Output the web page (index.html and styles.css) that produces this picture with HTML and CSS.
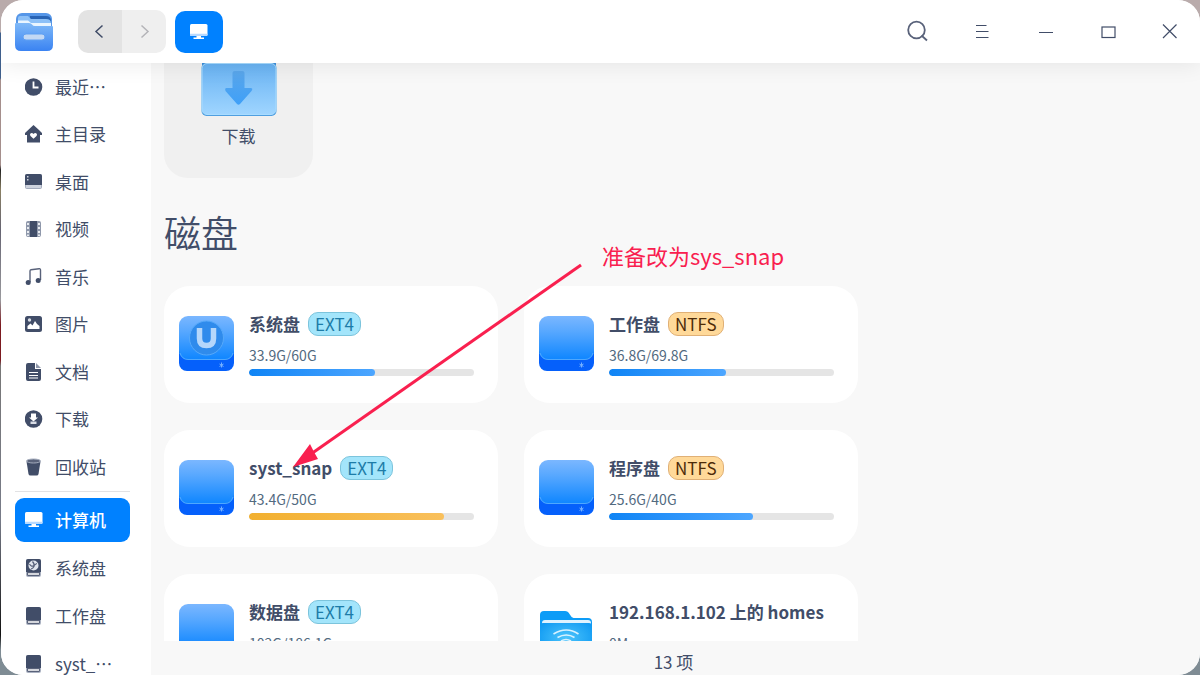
FILE: index.html
```html
<!DOCTYPE html>
<html lang="zh-CN">
<head>
<meta charset="utf-8">
<title>计算机</title>
<link rel="stylesheet" href="styles.css">
</head>
<body>
<svg class="defs" aria-hidden="true">
  <defs>
    <linearGradient id="diskTop" x1="0" y1="0" x2="0" y2="1"><stop offset="0" stop-color="#7bb7ff"/><stop offset=".35" stop-color="#58a8ff"/><stop offset="1" stop-color="#0f86ff"/></linearGradient>
    <linearGradient id="folderFront" x1="0" y1="0" x2="0" y2="1"><stop offset="0" stop-color="#68b2f2"/><stop offset="1" stop-color="#9fd5ff"/></linearGradient>
    <linearGradient id="arrowFill" x1="0" y1="0" x2="0" y2="1"><stop offset="0" stop-color="#5aa6ea"/><stop offset="1" stop-color="#3fa0f8"/></linearGradient>
    <radialGradient id="netFront" cx=".5" cy=".45" r=".6"><stop offset="0" stop-color="#4cc4fb"/><stop offset="1" stop-color="#119bf3"/></radialGradient>
    <linearGradient id="logoFront" x1="0" y1="0" x2="0" y2="1"><stop offset="0" stop-color="#7fb9f8"/><stop offset="1" stop-color="#3a83f2"/></linearGradient>
    <symbol id="disk" viewBox="0 0 55 55">
      <rect y="20" width="55" height="35" rx="8" fill="#0560fb"/>
      <path d="M0 34v3q2 7 9 7h37q7 0 9-7v-3z" fill="#0b74fb"/>
      <rect width="55" height="43.500" rx="9" fill="url(#diskTop)"/>
      <path d="M1 37q2 6.500 8 6.500h37q6 0 8-6.500" fill="none" stroke="#5fb2ff" stroke-width=".8"/>
      <path d="M42.500 46.500v5M40.500 48l4 2.500M44.500 48l-4 2.500" stroke="#75b1ff" stroke-width="1"/>
    </symbol>
    <symbol id="miniDisk" viewBox="0 0 18 18">
      <rect x="1" y="0" width="15" height="18" rx="2" fill="#aab1c1"/>
      <path d="M3 0h11q2 0 2 2v11H1V2q0-2 2-2z" fill="#414d68"/>
      <path d="M2 13h13v2.500q0 1.500-1.500 1.500h-10Q2 17 2 15.500z" fill="#59627a"/>
      <path d="M3 15h11" stroke="#fff" stroke-width="1.500"/>
    </symbol>
    <symbol id="monitor" viewBox="0 0 18 18">
      <rect x="0" y="1" width="17.500" height="12" rx="1.500" fill="#fff"/>
      <path d="M0 10.800h17.500v1q0 1.200-1.200 1.200H1.200Q0 13 0 11.800z" fill="#b7d9ff"/>
      <path d="M6.500 13h4.500v1.500h3V16h-10.500v-1.500h3z" fill="#fff"/>
    </symbol>
  </defs>
</svg>

<div class="window">
  <header class="titlebar">
    <svg class="logo" viewBox="0 0 38 38" aria-hidden="true">
      <rect x="1" y="0" width="36" height="22" rx="6" fill="#5596e8"/>
      <path d="M15 3h16q5 0 5 5v5H15z" fill="#2864b5"/>
      <path d="M3 5q0-2 2-2h8l3 3h15q5 0 5 4v5H3z" fill="#8cc0f7"/>
      <path d="M3 7.500h10l3 2.500h20v8H3z" fill="#e9f5ff"/>
      <path d="M0 11q0-1 1-1h13q2 0 3 1.500T20 13h17q1 0 1 1v18q0 6-6 6H6q-6 0-6-6z" fill="url(#logoFront)"/>
      <rect x="8" y="21" width="22" height="6" rx="3" fill="#c2d8f4" stroke="#5f9ff2"/>
    </svg>
    <nav class="history" aria-label="导航">
      <button class="back" aria-label="后退"><svg viewBox="0 0 16 16"><path d="M10.500 1.500 4 7.500l6.500 6" fill="none" stroke="#414d68" stroke-width="1.500"/></svg></button>
      <button class="forward" aria-label="前进"><svg viewBox="0 0 16 16"><path d="m5.500 1.500 6.500 6-6.500 6" fill="none" stroke="#b4b4b8" stroke-width="1.500"/></svg></button>
    </nav>
    <button class="place" aria-label="计算机"><svg viewBox="0 0 18 18"><use href="#monitor"/></svg></button>
    <div class="tools">
      <button aria-label="搜索"><svg viewBox="0 0 24 24"><circle cx="10.500" cy="10" r="8.300" fill="none" stroke="#59627a" stroke-width="1.800"/><path d="m15.500 15.500 5.500 5" stroke="#59627a" stroke-width="1.800"/></svg></button>
      <button aria-label="菜单"><svg viewBox="0 0 24 24"><path d="M7 5.500h10.500M7 11.500h12.500M7 17.500h12.500" stroke="#414d68" stroke-width="1.200"/></svg></button>
      <button aria-label="最小化"><svg viewBox="0 0 24 24"><path d="M7 12.500h14" stroke="#414d68" stroke-width="1.200"/></svg></button>
      <button aria-label="最大化"><svg viewBox="0 0 24 24"><rect x="7" y="7" width="13" height="10.500" fill="none" stroke="#414d68" stroke-width="1.200"/></svg></button>
      <button aria-label="关闭"><svg viewBox="0 0 24 24"><path d="m5 4.500 13.500 13.500M18.500 4.500 5 18" stroke="#414d68" stroke-width="1.200"/></svg></button>
    </div>
  </header>

  <div class="body">
    <aside class="sidebar">
      <ul class="places">
        <li><a href="#"><svg viewBox="0 0 18 18"><circle cx="8.500" cy="9" r="8.800" fill="#414d68"/><path d="M8.500 3.500v6h5" fill="none" stroke="#fff" stroke-width="1.800"/></svg><span>最近…</span></a></li>
        <li><a href="#"><svg viewBox="0 0 18 18"><path d="M8.500 0 0 8v2h2v7.500h13V10h2V8l-3-3z" fill="#414d68"/><path d="M8.500 13.800 5.500 11q-1.300-2.500 1-3 1.300 0 2 1 .7-1 2-1 2.300.5 1 3z" fill="#fff"/></svg><span>主目录</span></a></li>
        <li><a href="#"><svg viewBox="0 0 18 18"><rect y="1" width="17" height="15" rx="2" fill="#a3abbc"/><path d="M2 1h13q2 0 2 2v9H0V3q0-2 2-2z" fill="#414d68"/><path d="M2 3h1.500v1.500H2zM2 6h1.500v1.500H2zM1 12h15v3H1z" fill="#cdd2dd"/></svg><span>桌面</span></a></li>
        <li><a href="#"><svg viewBox="0 0 18 18"><rect x="1" y="1" width="15" height="16" rx="2" fill="#8f98ab"/><path d="M5 1h7v16H5z" fill="#414d68"/><path d="M2 3h2v2H2zM2 7h2v2H2zM2 11h2v2H2zM2 14.500h2V16H2zM13 3h2v2h-2zM13 7h2v2h-2zM13 11h2v2h-2zM13 14.500h2V16h-2z" fill="#e8ebf0"/></svg><span>视频</span></a></li>
        <li><a href="#"><svg viewBox="0 0 18 18"><path d="M5 14V3q0-1 1-1.300l8-1Q15.500.500 15.500 2v10" fill="none" stroke="#59627a" stroke-width="1.400"/><circle cx="3.200" cy="14.500" r="2.500" fill="#414d68"/><circle cx="13.200" cy="12.500" r="2.500" fill="#414d68"/></svg><span>音乐</span></a></li>
        <li><a href="#"><svg viewBox="0 0 18 18"><rect y="1" width="17" height="16" rx="2.500" fill="#414d68"/><path d="M2.500 14v-3l3-2.500 2 2 2.500-4.500 2 3 2.500 2v3z" fill="#fff"/><circle cx="4.500" cy="5" r="1.700" fill="#d9dde6"/></svg><span>图片</span></a></li>
        <li><a href="#"><svg viewBox="0 0 18 18"><path d="M3 0h7v6h6v10q0 2-2 2H3q-2 0-2-2V2q0-2 2-2z" fill="#414d68"/><path d="m11 0 5 5h-5z" fill="#8f98ab"/><path d="M4 9.500h9M4 12.500h9M4 15h9" stroke="#fff" stroke-width="1.200"/></svg><span>文档</span></a></li>
        <li><a href="#"><svg viewBox="0 0 18 18"><circle cx="8.500" cy="9" r="8.800" fill="#414d68"/><path d="M6 3.500h5v4h2l-4.500 4-4.500-4h2z" fill="#fff"/><path d="M5.500 11.500h6v2.500h-6z" fill="#d9dde6"/></svg><span>下载</span></a></li>
        <li><a href="#"><svg viewBox="0 0 18 18"><path d="M1.500 3.500h14l-2 12.500q-.3 1.500-2 1.500h-6q-1.700 0-2-1.500z" fill="#414d68"/><ellipse cx="8.500" cy="3" rx="7" ry="2" fill="#59627a" stroke="#a3abbc"/></svg><span>回收站</span></a></li>
      </ul>
      <hr class="divider">
      <ul class="devices">
        <li><a class="active" href="#" aria-current="page"><svg viewBox="0 0 18 18"><use href="#monitor"/></svg><span>计算机</span></a></li>
        <li><a href="#"><svg viewBox="0 0 18 18"><use href="#miniDisk"/><circle cx="8.500" cy="6.500" r="5" fill="#e1e5ec"/><path d="M4.500 5q2 3.500 4.500 1.500T12 4.500M7.500 2.500q2.500 3 1.500 5T6 10" fill="none" stroke="#59627a" stroke-width="1.200"/></svg><span>系统盘</span></a></li>
        <li><a href="#"><svg viewBox="0 0 18 18"><use href="#miniDisk"/></svg><span>工作盘</span></a></li>
        <li><a href="#"><svg viewBox="0 0 18 18"><use href="#miniDisk"/></svg><span>syst_…</span></a></li>
      </ul>
    </aside>

    <main class="main">
      <div class="content">
        <a class="folder" href="#">
          <svg viewBox="0 0 76 66" aria-hidden="true">
            <path d="M1 6q0-5 5-5h22l6 5h36q5 0 5 5v10H1z" fill="#3d8fdc"/>
            <rect x=".5" y="12" width="75" height="53" rx="5" fill="#4f9fe0"/>
            <rect x="1" y="12.500" width="74" height="51" rx="5" fill="url(#folderFront)" stroke="#a9dcff"/>
            <path d="M31.500 22q0-2 2-2h8q2 0 2 2v15h6q3 0 1 3L39 53q-1.500 1.500-3 0L24.500 40q-1-3 1-3h6z" fill="url(#arrowFill)"/>
          </svg>
          <span>下载</span>
        </a>
        <h2 class="heading">磁盘</h2>
        <div class="disks">
          <article class="disk">
            <svg class="disk-icon" viewBox="0 0 55 55" aria-hidden="true"><use href="#disk"/><circle cx="27.500" cy="22" r="17" fill="#2f8bec" stroke="#56a9fa"/><path d="M20.500 12v10.500q0 7 7 7t7-7V12" fill="none" stroke="#b5d7fb" stroke-width="5.500"/></svg>
            <div class="info"><div class="title"><h3>系统盘</h3><span class="tag ext">EXT4</span></div><p>33.9G/60G</p><progress aria-label="系统盘已用空间" max="100" value="56"></progress></div>
          </article>
          <article class="disk">
            <svg class="disk-icon" viewBox="0 0 55 55" aria-hidden="true"><use href="#disk"/></svg>
            <div class="info"><div class="title"><h3>工作盘</h3><span class="tag ntfs">NTFS</span></div><p>36.8G/69.8G</p><progress aria-label="工作盘已用空间" max="100" value="52"></progress></div>
          </article>
          <article class="disk">
            <svg class="disk-icon" viewBox="0 0 55 55" aria-hidden="true"><use href="#disk"/></svg>
            <div class="info"><div class="title"><h3>syst_snap</h3><span class="tag ext">EXT4</span></div><p>43.4G/50G</p><progress class="warn" aria-label="syst_snap已用空间" max="100" value="86.500"></progress></div>
          </article>
          <article class="disk">
            <svg class="disk-icon" viewBox="0 0 55 55" aria-hidden="true"><use href="#disk"/></svg>
            <div class="info"><div class="title"><h3>程序盘</h3><span class="tag ntfs">NTFS</span></div><p>25.6G/40G</p><progress aria-label="程序盘已用空间" max="100" value="64"></progress></div>
          </article>
          <article class="disk">
            <svg class="disk-icon" viewBox="0 0 55 55" aria-hidden="true"><use href="#disk"/></svg>
            <div class="info"><div class="title"><h3>数据盘</h3><span class="tag ext">EXT4</span></div><p>102G/186.1G</p><progress aria-label="数据盘已用空间" max="100" value="55"></progress></div>
          </article>
          <article class="disk">
            <svg class="disk-icon" viewBox="0 0 55 55" aria-hidden="true"><path d="M1 11q0-4 4-4h21q3 0 4.500 3t4 4H49q4 0 4 4v6H1z" fill="#0d9cf7"/><path d="M3 19q0-3 3-3h43q3 0 3 3v8H3z" fill="#dff3ff"/><path d="M1 22q0-3 3-3h46q3 0 3 3v25q0 4-4 4H5q-4 0-4-4z" fill="url(#netFront)"/><g fill="none" stroke="#d8f2ff" stroke-width="1.600"><path d="M14.500 30q13-8 25 0M18.500 33.500q9-5 17 0M22 37q5-3 10 0"/></g></svg>
            <div class="info"><div class="title"><h3>192.168.1.102 上的 homes</h3></div><p>0M</p></div>
          </article>
        </div>
      </div>
      <footer class="status">13 项</footer>
    </main>
  </div>
</div>

<svg class="pointer" viewBox="0 0 300 210" aria-hidden="true"><path d="M290 5 20 194" stroke="#f9204f" stroke-width="3"/><path d="m2 207 17-23 4 8 4 7z" fill="#f9204f"/></svg>
<p class="note">准备改为sys_snap</p>
</body>
</html>
```
FILE: styles.css
```css
* { box-sizing: border-box; }

body {
  margin: 0;
  height: 100vh;
  overflow: hidden;
  padding-left: 1px;
  background: linear-gradient(to bottom, #b9abab 0, #b9abab 32px, #3f5f8c 33px, #3f5f8c 78px, #a58f8c 80px, #a58f8c 165px, #222 170px, #8a8064 190px, #666472 230px, #9a9a9e 300px, #7c1a20 325px, #7c1a20 360px, #777 366px, #777b88 520px, #111 635px, #7f8c94 650px);
  color: #414d68;
  font: 17px/24px "Noto Sans CJK SC", sans-serif;
}

ul, p, h2, h3 { margin: 0; padding: 0; }
ul { list-style: none; }
a { color: inherit; text-decoration: none; }
button { border: 0; padding: 0; background: none; font: inherit; display: grid; place-items: center; }

.defs { position: absolute; width: 0; height: 0; }

.window {
  display: flex;
  flex-direction: column;
  height: 100%;
  border-radius: 22px;
  overflow: hidden;
  background: #fff;
}

.titlebar {
  display: flex;
  align-items: center;
  flex: none;
  height: 63px;
  padding: 0 18px 0 14px;
  background: #fff;
  box-shadow: 0 2px 22px rgba(0, 0, 0, 0.08);
  z-index: 1;
}
.logo { width: 38px; height: 38px; }
.history {
  display: flex;
  margin-left: 25px;
  border-radius: 10px;
  overflow: hidden;
}
.history button { width: 44px; height: 43px; background: #efefef; }
.history .back { background: #e3e3e3; }
.history svg { width: 16px; height: 16px; }
.place {
  width: 48px;
  height: 42px;
  margin-left: 9px;
  border-radius: 10px;
  background: #0081ff;
}
.place svg { width: 18px; height: 18px; }
.tools { display: flex; gap: 39px; margin-left: auto; }
.tools svg { width: 24px; height: 24px; display: block; }

.body { display: flex; flex: 1; min-height: 0; }

.sidebar { flex: none; width: 150px; padding: 2px 21px 0 14px; overflow: hidden; background: #fff; }
.places, .devices { display: flex; flex-direction: column; gap: 3px; }
.places li:nth-child(even):not(:last-child) { margin-bottom: 1px; }
.devices { gap: 4px; }
.sidebar a {
  display: flex;
  align-items: center;
  gap: 12px;
  height: 44px;
  padding-left: 10px;
  border-radius: 9px;
  white-space: nowrap;
}
.sidebar svg { flex: none; width: 18px; height: 18px; }
.sidebar .active { background: #0081ff; color: #fff; font-weight: 500; }
.divider { height: 1px; margin: 2px 0 6px; border: 0; background: #e2e2e4; }

.main { display: flex; flex-direction: column; flex: 1; min-width: 0; background: #f8f8f8; }
.content { flex: 1; min-height: 0; overflow: hidden; padding-left: 13px; }

.folder {
  display: flex;
  flex-direction: column;
  align-items: center;
  gap: 7px;
  width: 149px;
  margin-top: -28px;
  padding: 16px 0 30px;
  border-radius: 24px;
  background: #f0f0f0;
}
.folder svg { width: 76px; height: 66px; }

.heading { margin: 26px 0; font-size: 37px; line-height: 56px; font-weight: 350; }

.disks { display: grid; grid-template-columns: repeat(auto-fill, 334px); gap: 27px 26px; }
.disk {
  display: flex;
  gap: 15px;
  min-height: 117px;
  padding: 26px 24px 26px 15px;
  border-radius: 26px;
  background: #fff;
}
.disk-icon { flex: none; width: 55px; height: 55px; margin-top: 4px; }
.info { flex: 1; min-width: 0; }
.title { display: flex; align-items: center; gap: 8px; white-space: nowrap; }
.title h3 { font-size: 17px; line-height: 24px; font-weight: 700; }
.tag { padding: 0 6px; border: 1px solid; border-radius: 10px; line-height: 22px; }
.ext { background: #a3e5fb; border-color: #7cc4dc; color: #1d7ca8; }
.ntfs { background: #ffd999; border-color: #e0b076; color: #4d2b08; }
.info p { margin-top: 8px; font-size: 14px; line-height: 22px; color: #526a7f; }

progress {
  display: block;
  width: 100%;
  height: 7px;
  margin-top: 3px;
  appearance: none;
  border: 0;
  border-radius: 4px;
  overflow: hidden;
}
progress::-webkit-progress-bar { background: #e5e5e5; }
progress::-webkit-progress-value { border-radius: 4px; background: linear-gradient(to right, #0f84f5, #4da6ff); }
progress.warn::-webkit-progress-value { background: linear-gradient(to right, #f2b02f, #f9c05c); }

.status { flex: none; height: 34px; padding-top: 9px; padding-right: 4px; text-align: center; }

.pointer { position: absolute; left: 291px; top: 260px; width: 300px; height: 210px; }
.note { position: absolute; left: 602px; top: 239px; font-size: 22px; line-height: 32px; color: #f9204f; white-space: nowrap; }
```
